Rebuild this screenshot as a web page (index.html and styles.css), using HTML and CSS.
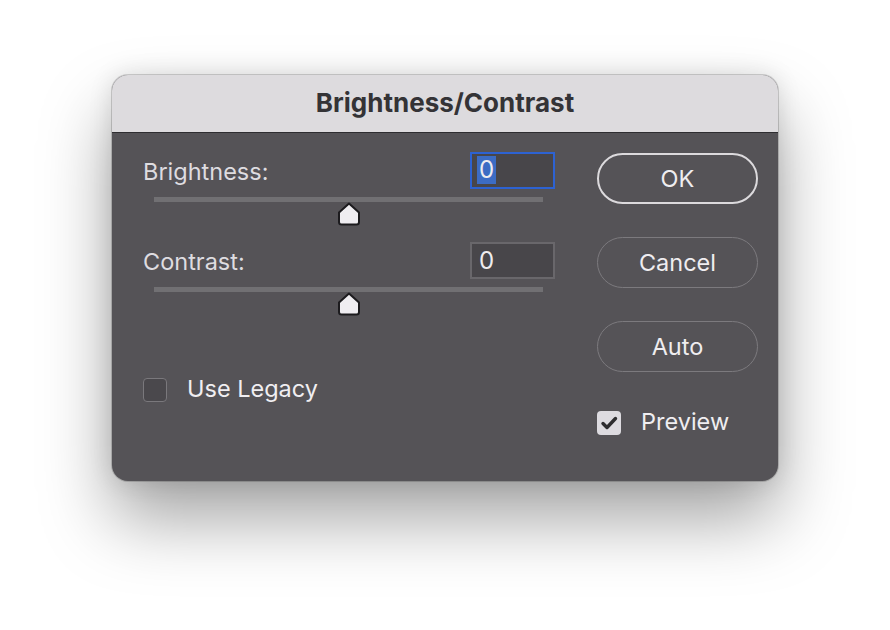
FILE: index.html
```html
<!DOCTYPE html>
<html>
<head>
	<title>Brightness/Contrast</title>
	<link rel="stylesheet" href="styles.css">
</head>
<body>
	<div class="dialog">
		<div class="titlebar">Brightness/Contrast</div>
		<div class="content">
			<div class="left">
				<div class="field">
					<div class="head">
						<span class="label">Brightness:</span>
						<div class="input focus"><span class="sel">0</span></div>
					</div>
					<div class="track">
						<svg class="thumb" width="24" height="24" viewBox="0 0 24 24"><path d="M12 1.5 L22 10.5 L22 20 Q22 22.5 19.5 22.5 L4.5 22.5 Q2 22.5 2 20 L2 10.5 Z" fill="#efedf1" stroke="#1c1b1e" stroke-width="2" stroke-linejoin="round"/></svg>
					</div>
				</div>
				<div class="field">
					<div class="head">
						<span class="label">Contrast:</span>
						<div class="input">0</div>
					</div>
					<div class="track">
						<svg class="thumb" width="24" height="24" viewBox="0 0 24 24"><path d="M12 1.5 L22 10.5 L22 20 Q22 22.5 19.5 22.5 L4.5 22.5 Q2 22.5 2 20 L2 10.5 Z" fill="#efedf1" stroke="#1c1b1e" stroke-width="2" stroke-linejoin="round"/></svg>
					</div>
				</div>
				<div class="check legacy">
					<span class="box"></span>
					<span class="text">Use Legacy</span>
				</div>
			</div>
			<div class="right">
				<button class="btn default">OK</button>
				<button class="btn">Cancel</button>
				<button class="btn">Auto</button>
				<div class="check preview">
					<span class="box on"><svg width="24" height="24" viewBox="0 0 24 24"><path d="M6 12.5 L10 16.5 L18.5 7.5" fill="none" stroke="#2e2d30" stroke-width="3.4" stroke-linecap="round" stroke-linejoin="round"/></svg></span>
					<span class="text">Preview</span>
				</div>
			</div>
		</div>
	</div>
</body>
</html>
```
FILE: styles.css
```css
* {
	box-sizing: border-box;
}
html, body {
	height: 100%;
}
body {
	margin: 0;
	padding: 75px 0 0 112px;
	background: #ffffff;
	font-family: Inter, "Liberation Sans", sans-serif;
}
.dialog {
	width: 666px;
	height: 406px;
	background: #555357;
	border-radius: 16px;
	overflow: hidden;
	box-shadow: 0 0 0 1px rgba(0, 0, 0, 0.16), 0 38px 70px rgba(0, 0, 0, 0.36), 0 0 24px rgba(0, 0, 0, 0.12);
}
.titlebar {
	height: 58px;
	background: #dddbde;
	border-bottom: 1px solid #2e2d30;
	color: #343336;
	font-weight: 700;
	font-size: 26px;
	text-align: center;
	line-height: 56px;
}
.content {
	display: flex;
	padding: 19px 20px 0 31px;
}
.left {
	width: 413px;
}
.right {
	width: 161px;
	margin-left: 42px;
	padding-top: 1px;
	display: flex;
	flex-direction: column;
}
.field {
	height: 90px;
}
.head {
	display: flex;
	justify-content: space-between;
	align-items: center;
	height: 37px;
}
.label {
	color: #dedce0;
	font-size: 23.5px;
	margin-top: 1px;
}
.input {
	width: 85px;
	height: 37px;
	background: #48464a;
	border: 2px solid #69676b;
	color: #eeecef;
	font-size: 24px;
	line-height: 33px;
	padding-left: 7px;
}
.input.focus {
	border-color: #2d62d2;
	padding-left: 5px;
}
.sel {
	display: inline-block;
	background: #3c6cc4;
	line-height: 28px;
	padding: 0 2px;
	vertical-align: 1px;
}
.track {
	position: relative;
	height: 5px;
	margin: 8px 12px 0 11px;
	background: #717073;
}
.thumb {
	position: absolute;
	top: 5px;
	left: 50%;
	margin-left: -12px;
}
.btn {
	width: 161px;
	height: 51px;
	margin-bottom: 33px;
	border-radius: 26px;
	border: 1.5px solid #7c7a7e;
	background: transparent;
	color: #efedf0;
	font-family: Inter, "Liberation Sans", sans-serif;
	font-size: 23.5px;
}
.btn.default {
	border: 2px solid #dcdadd;
}
.check {
	display: flex;
	align-items: center;
	color: #f0eef1;
	font-size: 23.5px;
}
.check .text {
	margin-top: -3px;
}
.legacy {
	margin-top: 45px;
}
.preview {
	margin-top: 5px;
}
.box {
	width: 24px;
	height: 24px;
	border-radius: 4px;
	border: 1.5px solid #7a787c;
	background: #4a484c;
	margin-right: 20px;
	display: flex;
	align-items: center;
	justify-content: center;
	flex-shrink: 0;
}
.box.on {
	border: none;
	background: #dddbe0;
}
```
